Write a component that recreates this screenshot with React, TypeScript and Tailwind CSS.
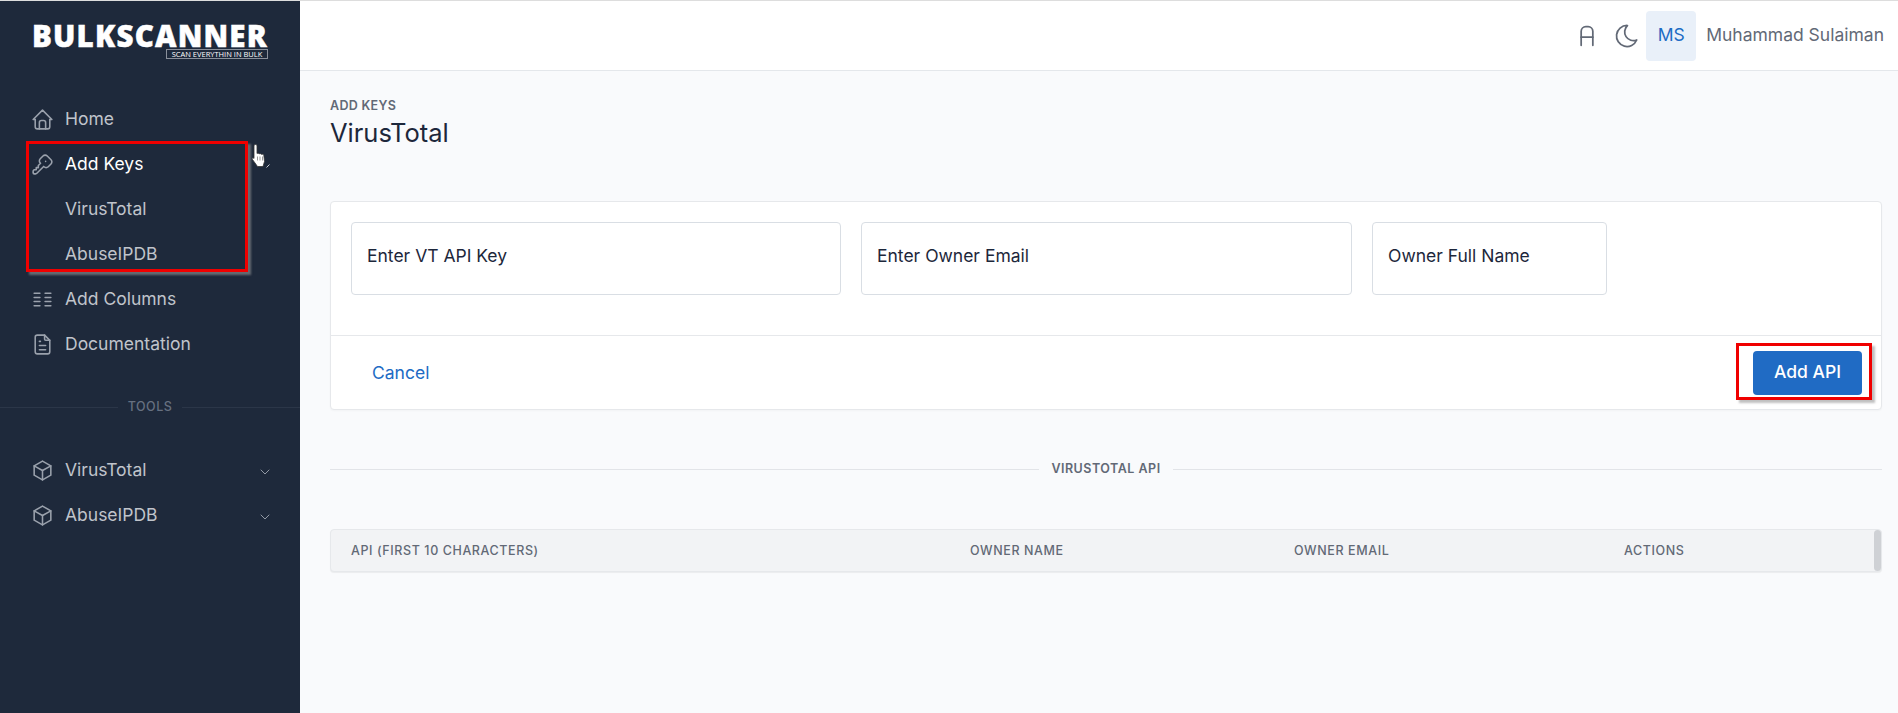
import React from 'react';
import {
  TbBox,
  TbChevronDown,
  TbColumns,
  TbFileText,
  TbHome,
  TbKey,
  TbLetterA,
  TbMoon,
} from 'react-icons/tb';

const navItemClass = 'flex h-[45px] items-center pl-[30px] pr-[27px] text-[17.5px]';

function NavItem({
  icon,
  label,
  active,
  chevron,
}: {
  icon?: React.ReactNode;
  label: string;
  active?: boolean;
  chevron?: boolean;
}) {
  return (
    <div className={`${navItemClass} ${active ? 'text-white' : 'text-[#c0c4cb]'}`}>
      <span className="flex w-[35px] shrink-0 items-center text-[#9aa1ac]">{icon}</span>
      <span className="flex-1">{label}</span>
      {chevron && <TbChevronDown size={16} strokeWidth={1.25} className="mt-[2px] text-[#aab0ba]" />}
    </div>
  );
}

function Sidebar() {
  return (
    <aside className="relative flex w-[300px] shrink-0 flex-col bg-[#1e293b]">
      {/* Logo */}
      <div className="ml-[32px] mt-[22px] flex w-[236px] flex-col items-end">
        <div className="h-[26px] w-full whitespace-nowrap font-['Open_Sans',sans-serif] text-[29.5px] font-extrabold leading-[26px] tracking-[1.2px] text-white [-webkit-text-stroke:0.5px_white]">
          BULKSCANNER
        </div>
        <div className="h-[10px] w-[102px] whitespace-nowrap border border-[#8a909b] text-center font-['Open_Sans',sans-serif] text-[7.5px] leading-[8px] text-white">
          SCAN EVERYTHIN IN BULK
        </div>
      </div>

      <nav className="mt-[38px]">
        <NavItem icon={<TbHome size={25} strokeWidth={1.5} />} label="Home" />
        <NavItem icon={<TbKey size={25} strokeWidth={1.5} />} label="Add Keys" active />
        <NavItem label="VirusTotal" />
        <NavItem label="AbuseIPDB" />
        <NavItem icon={<TbColumns size={25} strokeWidth={1.5} />} label="Add Columns" />
        <NavItem icon={<TbFileText size={25} strokeWidth={1.5} />} label="Documentation" />
      </nav>

      <div className="mt-[32px] flex items-center gap-[10px]">
        <div className="h-px flex-1 bg-[#2b3648]" />
        <span className="text-[12.5px] font-medium leading-[16px] tracking-[0.5px] text-[#667080]">TOOLS</span>
        <div className="h-px flex-1 bg-[#2b3648]" />
      </div>

      <nav className="mt-[33px]">
        <NavItem icon={<TbBox size={25} strokeWidth={1.5} />} label="VirusTotal" chevron />
        <NavItem icon={<TbBox size={25} strokeWidth={1.5} />} label="AbuseIPDB" chevron />
      </nav>

      {/* Annotation box and pointer over the menu */}
      <div className="absolute left-[26px] top-[140px] h-[131px] w-[222px] border-[3px] border-[#f00000] shadow-[3px_3px_2px_rgba(150,150,150,0.6)]" />
      <svg className="absolute left-[249px] top-[142px]" width="22" height="26" viewBox="0 0 22 26">
        <path
          d="M6.500 1.500c.9 0 1.500.6 1.500 1.500v7.500c.9-.5 2-.3 2.300.4.900-.5 2-.2 2.300.5.900-.4 2-.1 2.200.8l.7 6.300-1.500 5H8.500L3.500 16.500c-.6-1-.2-1.700.7-1.700L5 15.500V3c0-.9.600-1.500 1.500-1.500z"
          fill="#fff"
          stroke="#333"
          strokeWidth="0.8"
        />
        <path d="M8.500 13.500v4M11 13.500v4M13.500 13.500v4" stroke="#555" strokeWidth="0.6" />
        <path d="M17.500 24.500l3-3" stroke="#c8ccd2" strokeWidth="1" fill="none" />
      </svg>
    </aside>
  );
}

function Header() {
  return (
    <header className="flex h-[70px] shrink-0 items-center justify-end border-b border-[#e4e7eb] bg-white pr-[14px]">
      <TbLetterA size={28} strokeWidth={1.5} className="mr-[12px] text-[#626976]" />
      <TbMoon size={28} strokeWidth={1.5} className="mr-[5px] text-[#626976]" />
      <div className="flex h-[50px] w-[50px] items-center justify-center rounded-[4px] bg-[#e9f0f9] text-[17.5px] font-normal text-[#206bc4]">
        MS
      </div>
      <span className="ml-[10px] text-[17.5px] text-[#626976]">Muhammad Sulaiman</span>
    </header>
  );
}

function KeyForm() {
  return (
    <section className="relative mt-[52px] rounded-[4px] border border-[#e6e8eb] bg-white shadow-[0_1px_2px_rgba(0,0,0,0.03)]">
      <div className="flex gap-[20px] px-[20px] pb-[40px] pt-[20px]">
        <input
          placeholder="Enter VT API Key"
          className="h-[73px] w-[490px] rounded-[4px] border border-[#d9dee4] bg-white px-[15px] pb-[6px] text-[17.5px] outline-none placeholder:text-[#1d273b]"
        />
        <input
          placeholder="Enter Owner Email"
          className="h-[73px] w-[491px] rounded-[4px] border border-[#d9dee4] bg-white px-[15px] pb-[6px] text-[17.5px] outline-none placeholder:text-[#1d273b]"
        />
        <input
          placeholder="Owner Full Name"
          className="h-[73px] w-[235px] rounded-[4px] border border-[#d9dee4] bg-white px-[15px] pb-[6px] text-[17.5px] outline-none placeholder:text-[#1d273b]"
        />
      </div>
      <div className="flex h-[74px] items-center justify-between border-t border-[#e6e8eb] pl-[41px] pr-[19px]">
        <a className="pt-[2px] text-[17.5px] text-[#206bc4]">Cancel</a>
        <button className="h-[44px] w-[109px] rounded-[4px] bg-[#206bc4] text-[17.5px] font-medium text-white">
          Add API
        </button>
      </div>
      {/* Annotation box around the button */}
      <div className="absolute right-[9px] top-[141px] h-[57px] w-[136px] border-[3px] border-[#f00000] shadow-[3px_3px_2px_rgba(150,150,150,0.6)]" />
    </section>
  );
}

function KeyTable() {
  return (
    <div className="relative mt-[52px] grid h-[43px] grid-cols-[619px_324px_330px_1fr] items-center rounded-[4px] border border-[#e6e8eb] bg-[#f2f3f5] pl-[20px] pt-[2px] text-[12.5px] font-medium uppercase tracking-[0.6px] text-[#626976] shadow-[0_1px_1px_rgba(0,0,0,0.06)]">
      <span>API (First 10 Characters)</span>
      <span>Owner Name</span>
      <span>Owner Email</span>
      <span>Actions</span>
      <div className="absolute right-0 top-0 h-full w-[7px] rounded-[4px] bg-[#cfd1d5]" />
    </div>
  );
}

export default function App() {
  return (
    <div className="h-[713px] overflow-hidden border-t border-[#dddddd] bg-[#f9fafc] font-['Inter',sans-serif] text-[#1d273b]">
      <div className="flex h-full">
        <Sidebar />
        <main className="flex min-w-0 flex-1 flex-col">
          <Header />
          <div className="pl-[30px] pr-[16px]">
            <div className="mt-[27px] text-[12.5px] font-semibold leading-[16px] tracking-[0.3px] text-[#626976]">
              ADD KEYS
            </div>
            <h1 className="mt-[3px] text-[25.5px] font-normal leading-[32px]">VirusTotal</h1>
            <KeyForm />
            <div className="mt-[51px] flex items-center gap-[12px]">
              <div className="h-px flex-1 bg-[#e2e4e8]" />
              <span className="text-[12.5px] font-semibold leading-[16px] tracking-[0.5px] text-[#626976]">VIRUSTOTAL API</span>
              <div className="h-px flex-1 bg-[#e2e4e8]" />
            </div>
            <KeyTable />
          </div>
        </main>
      </div>
    </div>
  );
}
